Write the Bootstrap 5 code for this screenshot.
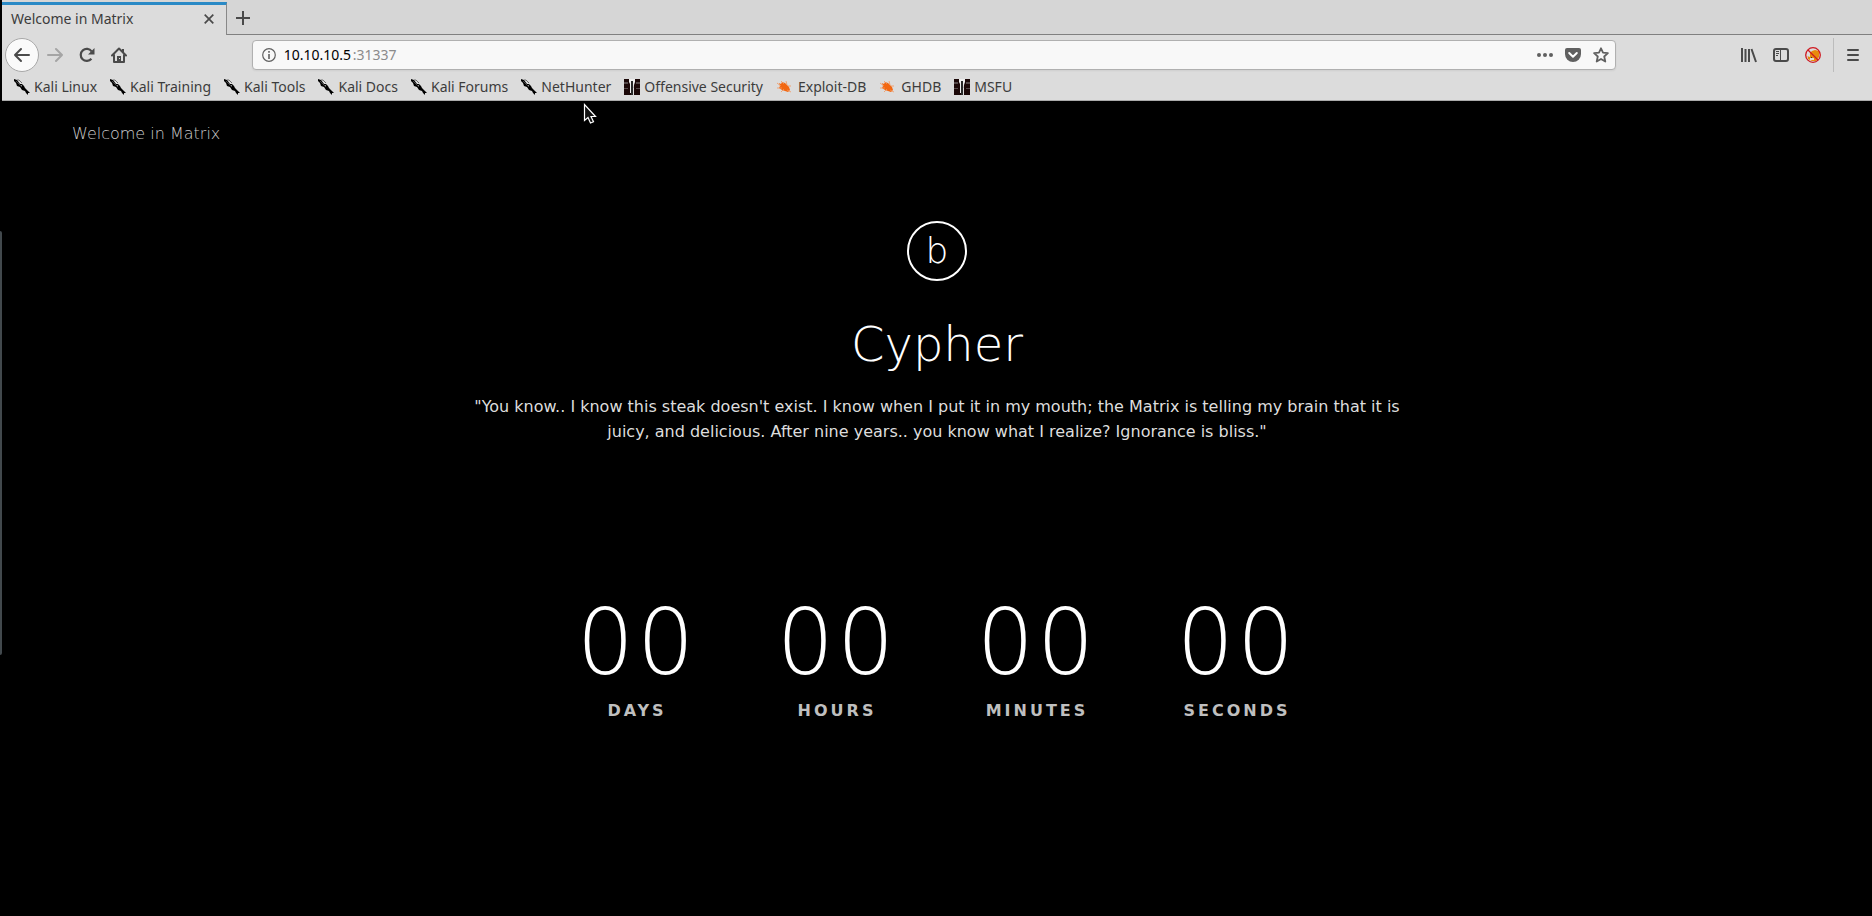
<!DOCTYPE html>
<html lang="en">
<head>
<meta charset="utf-8">
<meta name="viewport" content="width=device-width, initial-scale=1">
<title>Welcome in Matrix</title>
<link href="https://cdn.jsdelivr.net/npm/bootstrap@5.3.0/dist/css/bootstrap.min.css" rel="stylesheet">
<style>
  body { background: #000; padding-left: 2px; font-family: "DejaVu Sans", sans-serif; font-size: 16px; overflow-x: hidden; }
  button { border: 0; background: none; padding: 0; color: #4a4a4a; display: flex; align-items: center; justify-content: center; }
  svg { display: block; flex: none; }
  .dock-edge { left: 0; top: 231px; width: 2px; height: 424px; background: #42494d; border-radius: 0 2px 2px 0; }

  /* browser frame */
  .browser-ui { background: #dcdcdc; border-bottom: 1px solid #aaa; font-family: "Noto Sans", sans-serif; font-size: 14px; line-height: 20px; color: #3c3c3c; }
  .tab-strip { height: 35px; background: #d6d6d6; padding-top: 2px; }
  .tab-current { width: 225px; background: #dcdcdc; border-top: 3px solid #2a8ac6; border-right: 1px solid #888; padding: 0 12px 2px 9px; }
  .strip-rest { border-bottom: 1px solid #808080; padding-left: 9px; }
  .tool-row { height: 40px; padding: 0 12px 0 3px; }
  .round-back { width: 34px; height: 34px; border: 1px solid #a8a8a8; border-radius: 50%; background: #fafafa; }
  .spacer { flex: 5 1 0; }
  .address { flex: 54 1 0; height: 30px; background: #f8f8f8; border: 1px solid #b0b0b0; border-radius: 4px; padding: 0 6px 0 9px; box-shadow: 0 1px 2px #00000010; color: #666; }
  .address input { width: 69px; border: 0; padding: 0; background: none; color: #000; outline: 0; }
  .address .port { color: #8b8b8b; }
  .address button { color: #606060; }
  .menu-button { border-left: 1px solid #bcbcbc; height: 34px; padding-left: 10px; }
  .bookmarks { height: 25px; padding: 0 11px 2px 12px; gap: 13px; }
  .bookmarks a { color: #3c3c3c; gap: 4px; }
  .bookmarks .exploit { gap: 6px; }

  /* page */
  .page-title { font-weight: 200; color: #ccc; line-height: 24px; padding: 21px 70px; }
  .thin { font-family: "DejaVu Sans", "DejaVu Sans Light", sans-serif; font-weight: 200; }
  .emblem { width: 60px; height: 60px; border: 2px solid #fff; border-radius: 50%; font-size: 36px; line-height: 1; margin-top: 54px; }
  .person { font-size: 48px; line-height: 56px; margin: 35px 0 22px; }
  .quote { max-width: 940px; line-height: 25px; color: #ddd; margin-bottom: 149px; }
  .unit { width: 200px; }
  .count { font-size: 90px; line-height: 100px; letter-spacing: 3px; }
  .unit-name { font-weight: 700; letter-spacing: 3px; line-height: 24px; color: #bfbfbf; margin-top: 6px; }
  .pointer { left: 583px; top: 103px; }
</style>
</head>
<body class="min-vh-100 position-relative">
<svg width="0" height="0" class="position-absolute" aria-hidden="true">
  <symbol id="kali" viewBox="0 0 16 16"><path d="M0 0 3 1 6 5 8 5 10 7 11 9 14 12 16 14 14 14 14 16 12 14 11 12 8 11 6 8 3 7 2 4 0 2z" fill="#000"/><path d="M3 1 5 1 8 4M2 2l4 4" stroke="#555" stroke-width=".8" fill="none"/><path d="M6 6h2v2z" fill="#888"/></symbol>
  <symbol id="offsec" viewBox="0 0 16 16"><path d="M0 0h16v16H0z" fill="#1b0808"/><path d="M0 3h4v2H0zM0 9h4v1H0zM12 3h4v2h-4zM12 9h4v1h-4z" fill="#554a4a"/><path d="M5 0h6v3l-1 3v10H9V5H7v9H6V5L5 3z" fill="#eee"/><path d="M7 2h2v4l1 10H7z" fill="#292929"/><path d="M9 9h1v7H9z" fill="#ddd"/></symbol>
  <symbol id="bug" viewBox="0 0 16 16"><path d="M3 4 5 5 6 3 9 4 11 6 13 8 14 11 12 13 9 12 6 11 3 9 4 7z" fill="#f26711"/><path d="M1 4l4 3M5 2l3 3M10 2l1 4M1 9l5 0M5 13l3-3M12 7l3 0M11 11l4 2" stroke="#f2955c" stroke-width=".8"/></symbol>
</svg>
<div class="dock-edge position-absolute" aria-hidden="true"></div>

<header class="browser-ui">
  <div class="tab-strip d-flex">
    <div class="tab-current d-flex align-items-center justify-content-between">
      <span>Welcome in Matrix</span>
      <button type="button" aria-label="Close tab"><svg width="10" height="10" viewBox="0 0 10 10" stroke="currentColor" stroke-width="1.7"><path d="M.7.7l8.6 8.6M9.3.7.7 9.3"/></svg></button>
    </div>
    <div class="strip-rest d-flex flex-fill">
      <button type="button" aria-label="New tab"><svg width="14" height="14" viewBox="0 0 14 14" stroke="currentColor" stroke-width="2"><path d="M7 0v14M0 7h14"/></svg></button>
    </div>
  </div>
  <nav class="tool-row d-flex align-items-center">
    <button type="button" class="round-back" aria-label="Back"><svg width="18" height="16" viewBox="0 0 18 16" fill="none" stroke="currentColor" stroke-width="2" stroke-linecap="round" stroke-linejoin="round"><path d="M16 8H2M8 2 2 8l6 6"/></svg></button>
    <button type="button" class="ms-2" aria-label="Forward"><svg width="16" height="16" viewBox="0 0 16 16" fill="none" stroke="#a5a5a5" stroke-width="2" stroke-linecap="round" stroke-linejoin="round"><path d="M1 8h14M9 2l6 6-6 6"/></svg></button>
    <button type="button" class="ms-3" aria-label="Reload"><svg width="16" height="16" viewBox="0 0 16 16"><path d="M12.4 11.7a6 6 0 1 1 .2-7.3" fill="none" stroke="currentColor" stroke-width="2.2"/><path d="M15.5 1v6.5H9z" fill="currentColor"/></svg></button>
    <button type="button" class="ms-3" aria-label="Home"><svg width="16" height="16" viewBox="0 0 16 16"><path d="M1 8.500 8 1.500l7 7M3 7.500V15h10V7.500" fill="none" stroke="currentColor" stroke-width="2" stroke-linecap="round" stroke-linejoin="round"/><path d="M6 9h4v6H6zM11 2h2v4h-2z" fill="currentColor"/><path d="M8 11h1v1H8z" fill="#ddd"/></svg></button>
    <div class="spacer"></div>
    <div class="address d-flex align-items-center">
      <button type="button" aria-label="Site information"><svg width="14" height="14" viewBox="0 0 14 14"><circle cx="7" cy="7" r="6.300" fill="none" stroke="currentColor" stroke-width="1.2"/><path d="M6.200 6h1.600v5H6.200zM6.200 3h1.600v1.700H6.200z" fill="currentColor"/></svg></button>
      <input type="text" class="ms-2" value="10.10.10.5" aria-label="Address"><span class="port">:31337</span>
      <div class="d-flex align-items-center gap-2 ms-auto">
        <button type="button" class="me-1" aria-label="Page actions"><svg width="16" height="16" viewBox="0 0 16 16" fill="currentColor"><circle cx="2" cy="8" r="2"/><circle cx="8" cy="8" r="2"/><circle cx="14" cy="8" r="2"/></svg></button>
        <button type="button" class="me-1" aria-label="Save to Pocket"><svg width="16" height="16" viewBox="0 0 16 16"><path d="M2 1h12a2 2 0 0 1 2 2v4a8 8 0 0 1-16 0V3a2 2 0 0 1 2-2z" fill="currentColor"/><path d="m4.200 6 3.800 3.700L11.800 6" fill="none" stroke="#fff" stroke-width="2" stroke-linecap="round" stroke-linejoin="round"/></svg></button>
        <button type="button" aria-label="Bookmark this page"><svg width="16" height="16" viewBox="0 0 16 16"><path d="m8 1.300 2 4.400 4.900.5-3.700 3.300 1.100 5L8 12l-4.300 2.500 1.100-5L1.100 6.200 6 5.700z" fill="none" stroke="currentColor" stroke-width="1.800" stroke-linejoin="round"/></svg></button>
      </div>
    </div>
    <div class="spacer"></div>
    <div class="d-flex align-items-center gap-3">
      <button type="button" aria-label="Library"><svg width="16" height="16" viewBox="0 0 16 16" stroke="currentColor" stroke-width="2"><path d="M1 1v14M4.500 2v13M8 2v13M10.500 2l4.500 13"/></svg></button>
      <button type="button" aria-label="Sidebars"><svg width="16" height="16" viewBox="0 0 16 16" fill="none" stroke="currentColor"><rect x="1" y="2" width="14" height="12" rx="2" stroke-width="2"/><path d="M7.500 2v12M3 4.500h3M3 6.500h3M3 8.500h2"/></svg></button>
      <button type="button" class="me-2" aria-label="Proxy switcher, off"><svg width="16" height="16" viewBox="0 0 16 16"><path d="M2 5 5 6 7 4 10 3 14 4 14 10 11 14 7 14 3 12z" fill="#e88a0c"/><path d="M2 4l3 1 0 5-3-1zM5 11h4v2H5z" fill="#ddd"/><path d="M6 10h1v1H6z" fill="#333"/><circle cx="8" cy="8" r="7.300" fill="none" stroke="#cf1820" stroke-width="1.300"/><path d="m3 3 10 10" stroke="#cf1820" stroke-width="1.300"/></svg></button>
    </div>
    <button type="button" class="menu-button ms-1" aria-label="Menu"><svg width="16" height="14" viewBox="0 0 16 14" stroke="currentColor" stroke-width="2" stroke-linecap="round"><path d="M4 2h10M4 7h10M4 12h10"/></svg></button>
  </nav>
  <nav class="bookmarks d-flex align-items-center text-nowrap" aria-label="Bookmarks">
    <a class="d-flex align-items-center text-decoration-none" href="#"><svg width="16" height="16"><use href="#kali"/></svg>Kali Linux</a>
    <a class="d-flex align-items-center text-decoration-none" href="#"><svg width="16" height="16"><use href="#kali"/></svg>Kali Training</a>
    <a class="d-flex align-items-center text-decoration-none" href="#"><svg width="16" height="16"><use href="#kali"/></svg>Kali Tools</a>
    <a class="d-flex align-items-center text-decoration-none" href="#"><svg width="16" height="16"><use href="#kali"/></svg>Kali Docs</a>
    <a class="d-flex align-items-center text-decoration-none" href="#"><svg width="16" height="16"><use href="#kali"/></svg>Kali Forums</a>
    <a class="d-flex align-items-center text-decoration-none" href="#"><svg width="16" height="16"><use href="#kali"/></svg>NetHunter</a>
    <a class="d-flex align-items-center text-decoration-none" href="#"><svg width="16" height="16"><use href="#offsec"/></svg>Offensive Security</a>
    <a class="exploit d-flex align-items-center text-decoration-none" href="#"><svg width="16" height="16"><use href="#bug"/></svg>Exploit-DB</a>
    <a class="exploit d-flex align-items-center text-decoration-none" href="#"><svg width="16" height="16"><use href="#bug"/></svg>GHDB</a>
    <a class="d-flex align-items-center text-decoration-none" href="#"><svg width="16" height="16"><use href="#offsec"/></svg>MSFU</a>
  </nav>
</header>

<div class="page-title thin">Welcome in Matrix</div>
<main class="d-flex flex-column align-items-center text-center text-white">
  <div class="emblem thin d-flex align-items-center justify-content-center">b</div>
  <h1 class="person thin">Cypher</h1>
  <p class="quote">"You know.. I know this steak doesn't exist. I know when I put it in my mouth; the Matrix is telling my brain that it is juicy, and delicious. After nine years.. you know what I realize? Ignorance is bliss."</p>
  <div class="d-flex flex-wrap justify-content-center">
    <div class="unit"><div class="count thin">00</div><div class="unit-name">DAYS</div></div>
    <div class="unit"><div class="count thin">00</div><div class="unit-name">HOURS</div></div>
    <div class="unit"><div class="count thin">00</div><div class="unit-name">MINUTES</div></div>
    <div class="unit"><div class="count thin">00</div><div class="unit-name">SECONDS</div></div>
  </div>
</main>

<svg class="pointer position-absolute" width="14" height="22" viewBox="0 0 14 22" aria-hidden="true"><path d="M1.500 1.500v16l3.500-3 2.500 5.500 3-1.200L8 13.500h4.500z" fill="#111" stroke="#fff" stroke-width="1.200"/></svg>
<script src="https://cdn.jsdelivr.net/npm/bootstrap@5.3.0/dist/js/bootstrap.bundle.min.js"></script>
</body>
</html>
